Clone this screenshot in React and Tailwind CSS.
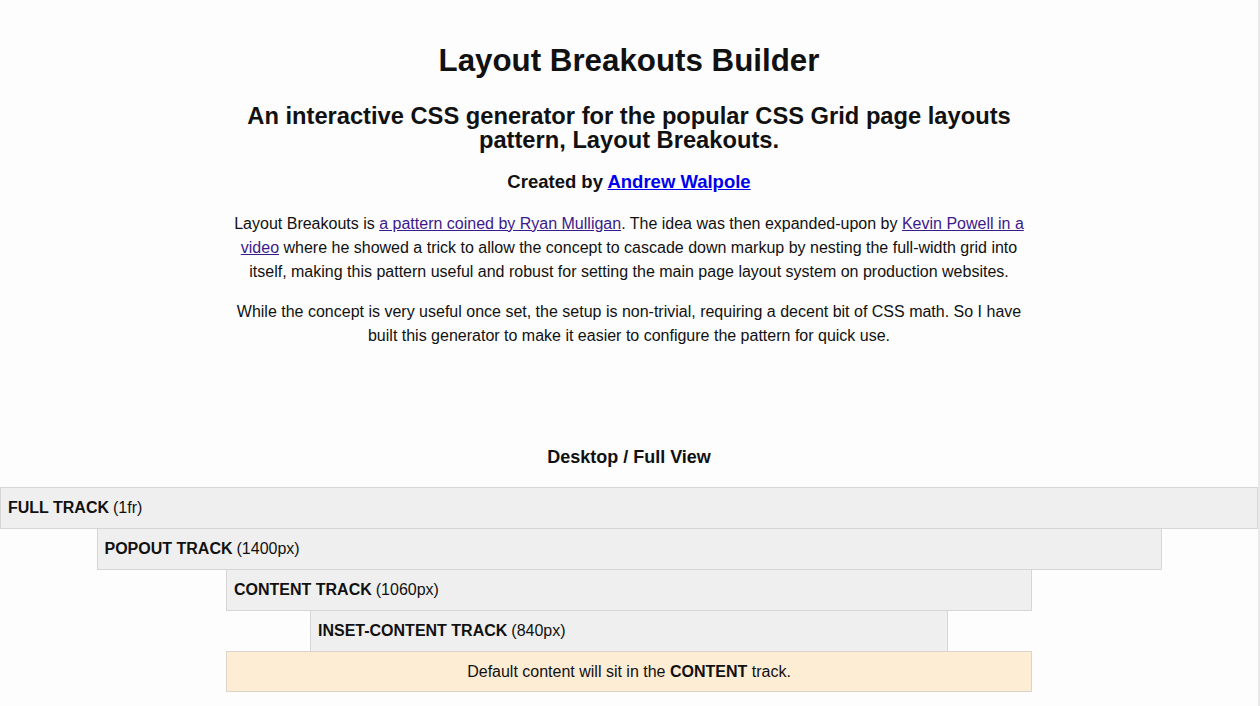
export default function App() {
  const tracks = [
    { name: 'FULL TRACK', size: '1fr', width: 'w-full' },
    { name: 'POPOUT TRACK', size: '1400px', width: 'w-[1065px]' },
    { name: 'CONTENT TRACK', size: '1060px', width: 'w-[806px]' },
    { name: 'INSET-CONTENT TRACK', size: '840px', width: 'w-[638px]' },
  ];

  return (
    <div className="min-h-screen bg-[#fdfdfd] text-[#111] font-['Liberation_Sans',Arial,sans-serif] flex">
      <div className="w-[1258px]">
        {/* Header */}
        <div className="w-[806px] mx-auto text-center pt-[42px]">
          <h1 className="text-[31.3px] leading-[38px] font-bold">Layout Breakouts Builder</h1>
          <h2 className="text-[23.7px] leading-[24px] font-bold mt-[24px] px-2">
            An interactive CSS generator for the popular CSS Grid page layouts pattern, Layout Breakouts.
          </h2>
          <p className="text-[18.5px] leading-[24px] font-bold mt-[18px]">
            Created by{' '}
            <a href="#" className="text-[#0000ee] underline">Andrew Walpole</a>
          </p>
          <p className="text-[16px] leading-[24px] mt-[18px] px-[2px]">
            Layout Breakouts is{' '}
            <a href="#" className="text-[#3b1a8b] underline">a pattern coined by Ryan Mulligan</a>. The idea was then
            expanded-upon by{' '}
            <a href="#" className="text-[#3b1a8b] underline">Kevin Powell in a video</a> where he showed a trick to
            allow the concept to cascade down markup by nesting the full-width grid into itself, making this pattern
            useful and robust for setting the main page layout system on production websites.
          </p>
          <p className="text-[16px] leading-[24px] mt-[16px]">
            While the concept is very useful once set, the setup is non-trivial, requiring a decent bit of CSS math. So
            I have built this generator to make it easier to configure the pattern for quick use.
          </p>
        </div>

        {/* Preview */}
        <h3 className="text-center text-[18px] leading-[24px] font-bold mt-[97px] mb-[18px]">Desktop / Full View</h3>
        <div className="flex flex-col items-center">
          {tracks.map((t) => (
            <div
              key={t.name}
              className={`${t.width} h-[42px] -mb-px bg-[#efefef] border border-[#d6d6d6] flex items-center pl-[7px] text-[16px]`}
            >
              <span className="font-bold">{t.name}</span>
              <span className="ml-[4px]">({t.size})</span>
            </div>
          ))}
          <div className="w-[806px] h-[41px] bg-[#fdedd5] border border-[#dcd4c8] flex items-center justify-center text-[16px]">
            Default content will sit in the&nbsp;<span className="font-bold">CONTENT</span>&nbsp;track.
          </div>
        </div>
      </div>
      <div className="w-[2px] bg-[#e8e8e8]" />
    </div>
  );
}
